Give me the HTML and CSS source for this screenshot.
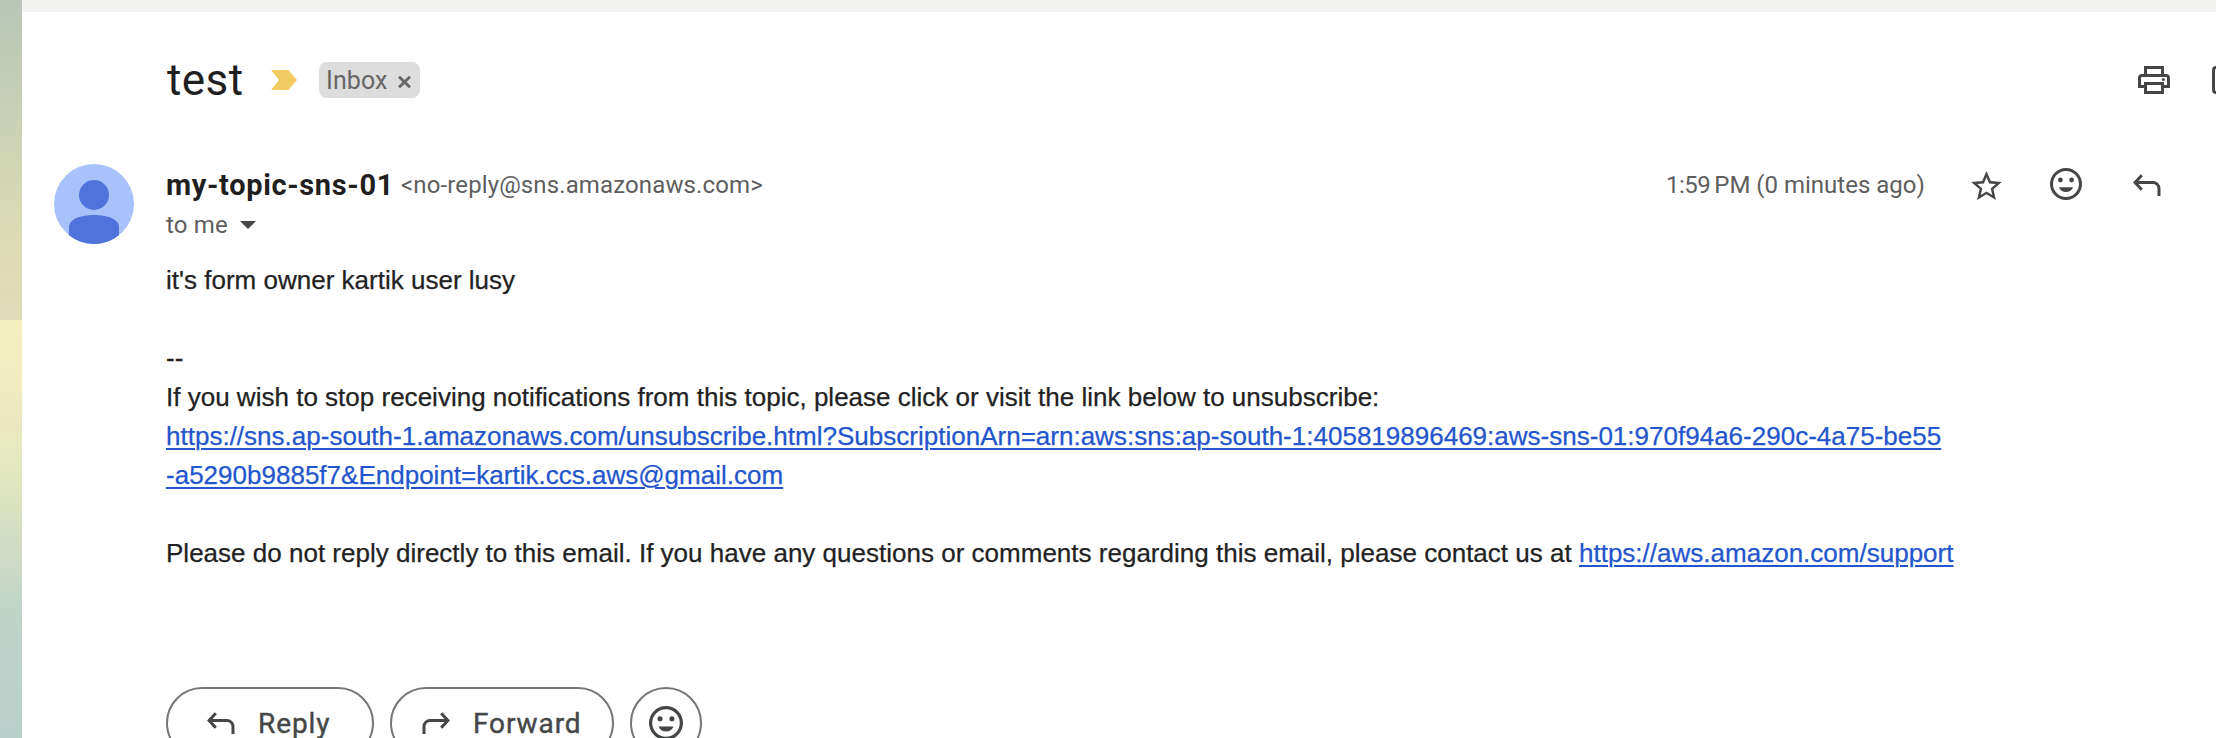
FILE: index.html
```html
<!DOCTYPE html>
<html lang="en">
<head>
<meta charset="utf-8">
<title>test</title>
<link rel="stylesheet" href="styles.css">
</head>
<body>
<svg class="defs" width="0" height="0">
  <symbol id="smile" viewBox="2 2 20 20"><path d="M12 2a10 10 0 1 0 0 20 10 10 0 0 0 0-20zm0 18.1a8.1 8.1 0 1 1 0-16.2 8.1 8.1 0 0 1 0 16.2z"/><circle cx="8.5" cy="9.5" r="1.5"/><circle cx="15.5" cy="9.5" r="1.5"/><path d="M7.6 14h8.8c-.6 1.8-2.300 3-4.400 3s-3.800-1.200-4.400-3z"/></symbol>
  <symbol id="reply" viewBox="0 0 28 22"><path d="M8.800 1.300 2.100 8.500l6.700 7.200M2.500 8.500H20a6 6 0 0 1 6 6V22" fill="none" stroke="currentColor" stroke-width="3"/></symbol>
</svg>
<div class="wallpaper"></div>
<main class="window">
  <div class="topbar"></div>
  <header class="subject">
    <h1 class="title">test</h1>
    <svg class="important" viewBox="0 0 26 20"><path d="M0 0h17.500L26 10l-8.500 10H0l8-10z"/></svg>
    <span class="label"><span class="label-name">Inbox</span><svg class="close" viewBox="0 0 13 12"><path d="M1 .7 12 11.300M12 .7 1 11.300"/></svg></span>
    <svg class="print" viewBox="0 0 32 28"><path d="M7.500 9V1.500h17V9M7.500 20.500h-6V12q0-2.500 2.500-2.500h24q2.500 0 2.500 2.500v8.500h-6M7.500 17.500h17v9h-17z"/><circle cx="25.300" cy="13.500" r="1.500"/></svg>
    <svg class="popout" viewBox="0 0 28 28"><path d="M14 1.500H4Q1.500 1.500 1.500 4v20q0 2.500 2.500 2.500h20q2.500 0 2.500-2.500V14"/></svg>
  </header>
  <article class="message">
    <svg class="avatar" viewBox="0 0 80 80"><circle class="avatar-bg" cx="40" cy="40" r="40"/><circle cx="40" cy="31" r="15"/><path d="M15 71.200V63C15 55 27 51 40 51s25 4 25 12v8.200A40 40 0 0 1 15 71.200z"/></svg>
    <div class="content">
      <div class="meta">
        <span class="sender">my-topic-sns-01</span>
        <span class="address">&lt;no-reply@sns.amazonaws.com&gt;</span>
        <span class="date"><span class="time">1:59</span><span class="thin"></span>PM (0 minutes ago)</span>
        <svg class="star" viewBox="2 2 20 19"><path d="M22 9.240l-7.190-.62L12 2 9.190 8.630 2 9.240l5.460 4.730L5.820 21 12 17.270 18.180 21l-1.630-7.030L22 9.240zM12 15.400l-3.760 2.270 1-4.280-3.320-2.880 4.380-.38L12 6.100l1.710 4.040 4.380.38-3.320 2.880 1 4.280L12 15.400z"/></svg>
        <svg class="react"><use href="#smile"/></svg>
        <svg class="reply"><use href="#reply"/></svg>
      </div>
      <div class="recipient"><span class="to">to me</span><svg class="caret" viewBox="0 0 16 8"><path d="M0 0h16L8 8z"/></svg></div>
      <div class="body">it's form owner kartik user lusy<br><br>--<br>If you wish to stop receiving notifications from this topic, please click or visit the link below to unsubscribe:<br><a class="link">https://sns.ap-south-1.amazonaws.com/unsubscribe.html?SubscriptionArn=arn:aws:sns:ap-south-1:405819896469:aws-sns-01:970f94a6-290c-4a75-be55<br>-a5290b9885f7&amp;Endpoint=kartik.ccs.aws@gmail.com</a><br><br>Please do not reply directly to this email. If you have any questions or comments regarding this email, please contact us at <a class="link">https://aws.amazon.com/support</a></div>
      <div class="actions">
        <button class="button button-reply"><svg class="arrow"><use href="#reply"/></svg><span class="reply-text">Reply</span></button>
        <button class="button button-forward"><svg class="arrow flipped"><use href="#reply"/></svg><span class="forward-text">Forward</span></button>
        <button class="button button-react"><svg class="react-big"><use href="#smile"/></svg></button>
      </div>
    </div>
  </article>
</main>
</body>
</html>
```
FILE: styles.css
```css
* { box-sizing: border-box; }
body {
  margin: 0;
  width: 2216px;
  height: 738px;
  overflow: hidden;
  display: flex;
  background: #fff;
  font-family: Roboto, "Liberation Sans", sans-serif;
  color: #1f1f1f;
}
svg { display: block; flex: none; fill: #444746; color: #444746; }
.defs { position: absolute; }
.wallpaper {
  flex: none;
  width: 22px;
  height: 738px;
  background: linear-gradient(#b9c6b8 0, #c5ceb5 90px, #d5d8b5 190px, #dfdcb5 260px, #e0dbb9 320px, #f4efbf 320px, #f1ecc0 385px, #eae6bf 425px, #e8ebc0 440px, #dfe5c0 490px, #d4dec2 530px, #cdd8c7 570px, #c1d6c7 600px, #bdd3ca 640px, #b8d0ca 738px);
}
.window { flex: none; width: 2194px; height: 738px; overflow: hidden; }
.topbar { height: 12px; background: #f2f3f1; }
.subject { display: flex; align-items: center; height: 136px; padding-left: 144px; }
.title { flex: none; width: 77px; margin: 0 28px 0 0; padding-left: 1px; font-size: 44px; line-height: 56px; font-weight: 400; letter-spacing: 0.4px; }
.important { width: 26px; height: 20px; fill: #f1ca62; }
.label { display: flex; align-items: center; width: 101px; height: 36px; margin-left: 22px; padding-left: 7px; border-radius: 8px; background: #ddd; color: #666; font-size: 25px; line-height: 36px; }
.label-name { width: 72px; padding-top: 2px; letter-spacing: 0.1px; }
.close { width: 13px; height: 12px; margin-top: 4px; fill: none; stroke: #666; stroke-width: 2.8; }
.print { width: 32px; height: 28px; margin-left: auto; stroke: #444746; stroke-width: 3; }
.print path, .popout path { fill: none; }
.print circle { stroke: none; }
.popout { width: 28px; height: 28px; margin: 0 -24px 0 42px; stroke: #444746; stroke-width: 3; }
.message { display: flex; padding: 16px 0 0 32px; }
.avatar { width: 80px; height: 80px; fill: #4f73da; }
.avatar-bg { fill: #a8c2fb; }
.content { width: 2050px; margin-left: 32px; }
.meta { display: flex; align-items: center; height: 40px; white-space: nowrap; color: #5e5e5e; font-size: 24px; line-height: 40px; }
.sender { width: 235px; padding-top: 1px; font-size: 29px; font-weight: 700; letter-spacing: 0.65px; color: #1f1f1f; }
.address { width: 400px; padding-top: 2px; letter-spacing: 0.12px; }
.date { display: flex; width: 261px; margin-left: 865px; padding-top: 2px; }
.time { letter-spacing: -0.5px; }
.thin { width: 4px; }
.star { width: 31px; height: 29px; margin: 2px 48px 0 44px; }
.react { width: 32px; height: 32px; }
.reply { width: 28px; height: 22px; margin: 1px 0 0 51px; }
.recipient { display: flex; align-items: center; height: 40px; color: #5e5e5e; font-size: 24px; line-height: 40px; }
.to { width: 74px; padding-top: 2px; letter-spacing: 0.2px; }
.caret { width: 16px; height: 8px; margin-top: 2px; }
.body { margin-top: 17px; font: 26px/39px "Liberation Sans", Arial, sans-serif; letter-spacing: 0.008px; color: #222; white-space: nowrap; -webkit-text-stroke: 0.25px; }
.link { color: #2355cc; text-decoration: underline; text-decoration-thickness: 2px; text-underline-offset: 3px; }
.actions { display: flex; gap: 16px; margin-top: 114px; }
.button { display: flex; align-items: center; height: 72px; padding: 0; border: 2px solid #747775; border-radius: 36px; background: #fff; color: #444746; font: 400 28px/36px Roboto, sans-serif; letter-spacing: 0.9px; -webkit-text-stroke: 0.4px; }
.button-reply { width: 208px; padding-left: 39px; }
.button-forward { width: 224px; padding-left: 30px; }
.button-react { width: 72px; justify-content: center; }
.arrow { width: 28px; height: 22px; margin-right: 23px; }
.reply-text, .forward-text { padding-top: 1px; }
.flipped { transform: scaleX(-1); }
.react-big { width: 34px; height: 34px; }
```
